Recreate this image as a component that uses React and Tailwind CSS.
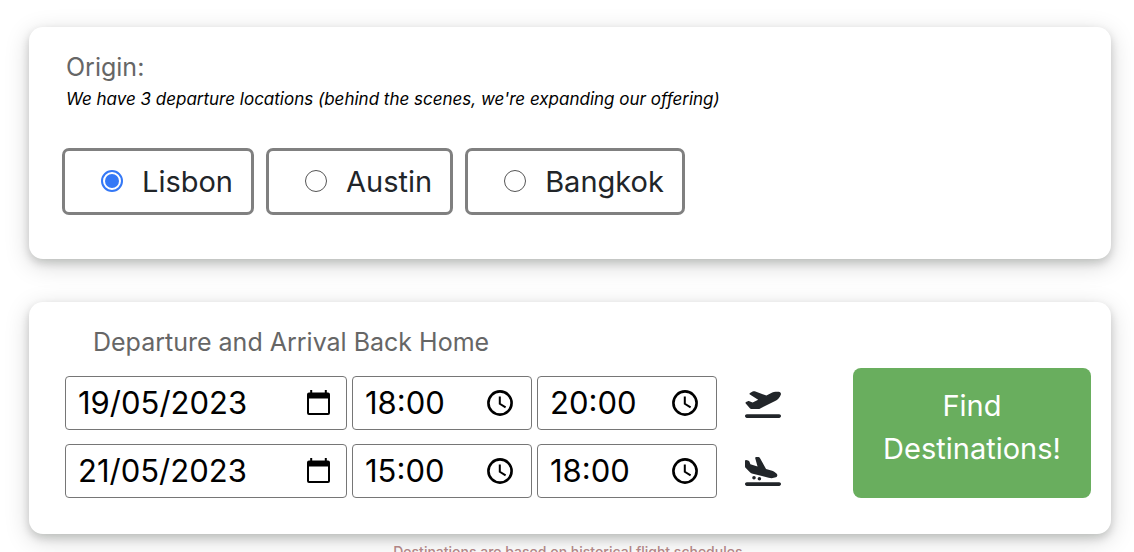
import { useState } from "react";
import { FaPlaneArrival, FaPlaneDeparture } from "react-icons/fa6";

const ORIGINS = ["Lisbon", "Austin", "Bangkok"];

const TRIPS = [
  {
    id: "departure",
    date: "19/05/2023",
    from: "18:00",
    to: "20:00",
    Icon: FaPlaneDeparture,
  },
  {
    id: "arrival",
    date: "21/05/2023",
    from: "15:00",
    to: "18:00",
    Icon: FaPlaneArrival,
  },
];

function CalendarIcon() {
  return (
    <svg viewBox="0 0 24 27" className="w-6 h-[27px] shrink-0" aria-hidden="true">
      <path
        fillRule="evenodd"
        d="M4.200 0h2v2.400h12.600V0h2v2.400h1.200a2 2 0 0 1 2 2V23a2 2 0 0 1-2 2H3a2 2 0 0 1-2-2V4.400a2 2 0 0 1 2-2h1.200zM3 8.400V23h19V8.400z"
      />
    </svg>
  );
}

function ClockIcon() {
  return (
    <svg
      viewBox="0 0 26 26"
      className="w-[26px] h-[26px] shrink-0"
      fill="none"
      stroke="currentColor"
      aria-hidden="true"
    >
      <circle cx="13" cy="13" r="11.600" strokeWidth="2.600" />
      <path d="M12.800 6.500v7.300l5.800 3.500" strokeWidth="2" />
    </svg>
  );
}

function Field({ label, value, onChange, wide, children }) {
  return (
    <label
      className={`flex items-center h-[54px] pl-3 rounded-[4px] border border-[#767676] bg-white text-black ${
        wide ? "w-[282px] pr-4" : "w-[180px] pr-[18px]"
      }`}
    >
      <input
        type="text"
        aria-label={label}
        value={value}
        onChange={(e) => onChange(e.target.value)}
        className="flex-1 min-w-0 text-[31px] leading-9 outline-none"
      />
      {children}
    </label>
  );
}

function TripRow({ trip }) {
  const [date, setDate] = useState(trip.date);
  const [from, setFrom] = useState(trip.from);
  const [to, setTo] = useState(trip.to);
  const { Icon } = trip;

  return (
    <div className="flex items-center gap-[5px]">
      <Field label={`${trip.id} date`} value={date} onChange={setDate} wide>
        <CalendarIcon />
      </Field>
      <Field label={`${trip.id} earliest`} value={from} onChange={setFrom}>
        <ClockIcon />
      </Field>
      <Field label={`${trip.id} latest`} value={to} onChange={setTo}>
        <ClockIcon />
      </Field>
      <Icon className="ml-[23px] w-9 h-[29px] shrink-0" />
    </div>
  );
}

export default function App() {
  const [origin, setOrigin] = useState("Lisbon");

  return (
    <main className="flex flex-col pt-[27px] pl-[29px] pr-[23px] bg-white text-[#212529] font-['Inter',sans-serif]">
      {/* Origin */}
      <section className="rounded-[14px] bg-white px-[33px] pt-6 pb-11 shadow-[0_4px_8px_rgba(0,12,8,0.16),0_6px_24px_rgba(0,12,8,0.17)]">
        <div className="px-1">
          <h2 className="text-[25px] leading-8 text-[#666]">Origin:</h2>
          <p className="text-[17px] leading-8 italic text-black">
            We have 3 departure locations (behind the scenes, we&apos;re
            expanding our offering)
          </p>
        </div>
        <div className="mt-[33px] flex gap-3">
          {ORIGINS.map((name) => (
            <label
              key={name}
              className="flex items-center gap-[19px] h-[67px] pl-9 pr-[18px] rounded-[7px] border-3 border-[#808080] text-[29px]"
            >
              <input
                type="radio"
                name="origin"
                value={name}
                checked={origin === name}
                onChange={() => setOrigin(name)}
                className="w-[22px] h-[22px] p-0.5 mb-0.5 appearance-none rounded-full border border-[#555] bg-clip-content checked:border-2 checked:border-[#3478f6] checked:bg-[#3478f6]"
              />
              {name}
            </label>
          ))}
        </div>
      </section>

      {/* Dates and search */}
      <section className="mt-[43px] flex items-end justify-between rounded-[14px] bg-white pl-9 pr-5 pt-6 pb-9 shadow-[0_4px_8px_rgba(0,12,8,0.16),0_6px_24px_rgba(0,12,8,0.17)]">
        <div>
          <h2 className="pl-7 text-[25px] leading-8 text-[#666]">
            Departure and Arrival Back Home
          </h2>
          <div className="mt-[18px] flex flex-col gap-3.5">
            {TRIPS.map((trip) => (
              <TripRow key={trip.id} trip={trip} />
            ))}
          </div>
        </div>
        <button
          type="button"
          className="w-[238px] h-[130px] px-5 pb-3 rounded-lg bg-[#69ae5e] text-white text-[29px] leading-[43px]"
        >
          Find Destinations!
        </button>
      </section>

      <p className="mt-1.5 text-center text-sm leading-6 font-medium text-[#b08585]">
        Destinations are based on historical flight schedules.
      </p>
    </main>
  );
}
